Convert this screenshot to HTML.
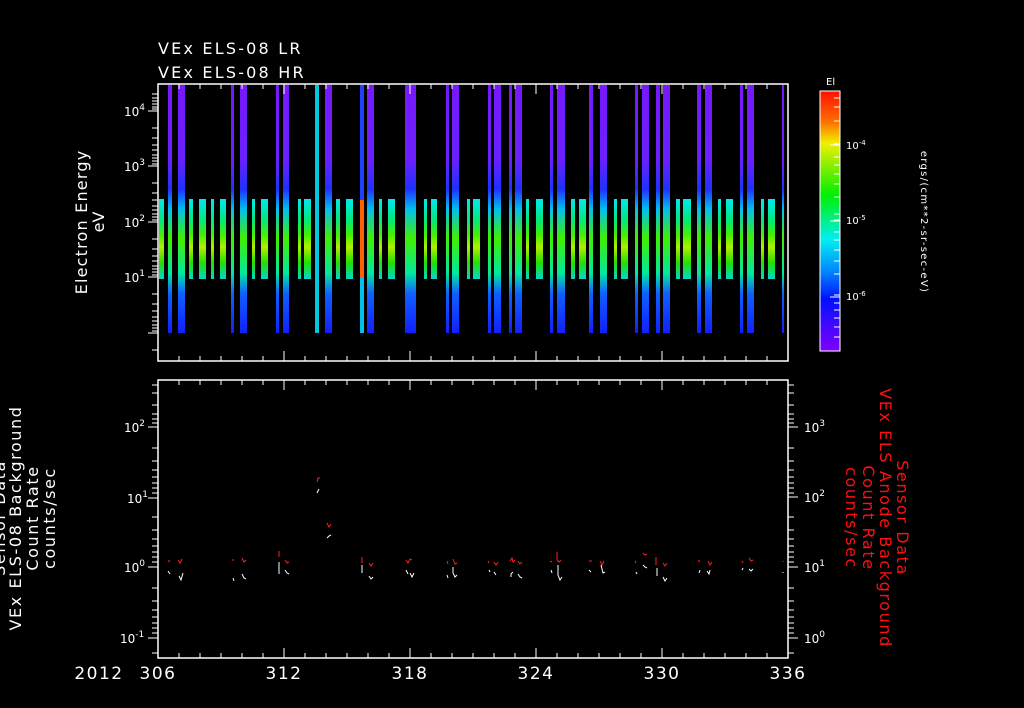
<!DOCTYPE html>
<html><head><meta charset="utf-8"><style>
html,body{margin:0;padding:0;background:#000;}
svg{display:block;}
text{font-family:"DejaVu Sans","Liberation Sans",sans-serif;fill:#fff;}
</style></head><body>
<svg width="1024" height="708" viewBox="0 0 1024 708" xmlns="http://www.w3.org/2000/svg">
<defs>
<linearGradient id="band" x1="0" y1="0" x2="0" y2="1">
<stop offset="0" stop-color="#00e8f0"/><stop offset="0.25" stop-color="#00e880"/><stop offset="0.45" stop-color="#40f000"/><stop offset="0.6" stop-color="#b0f000"/><stop offset="0.8" stop-color="#20e000"/><stop offset="1" stop-color="#00d8d0"/>
</linearGradient>
<linearGradient id="tall" x1="0" y1="0" x2="0" y2="1">
<stop offset="0" stop-color="#7818ff"/><stop offset="0.3" stop-color="#6a20ff"/><stop offset="0.42" stop-color="#2030ff"/><stop offset="0.5" stop-color="#00c0f0"/><stop offset="0.62" stop-color="#40f000"/><stop offset="0.76" stop-color="#00e8a0"/><stop offset="0.84" stop-color="#1060ff"/><stop offset="1" stop-color="#1020ff"/>
</linearGradient>
<linearGradient id="cbar" x1="0" y1="0" x2="0" y2="1">
<stop offset="0" stop-color="#ff1000"/><stop offset="0.12" stop-color="#ff7000"/><stop offset="0.2" stop-color="#f0f000"/><stop offset="0.4" stop-color="#00f000"/><stop offset="0.57" stop-color="#00f0f0"/><stop offset="0.7" stop-color="#0080ff"/><stop offset="0.8" stop-color="#0010ff"/><stop offset="1" stop-color="#8000ff"/>
</linearGradient>
</defs>

<text x="158" y="54" font-size="16" letter-spacing="2.2">VEx ELS-08 LR</text>
<text x="158" y="78" font-size="16" letter-spacing="2.2">VEx ELS-08 HR</text>

<g fill="url(#band)">
<rect x="159" y="199" width="5" height="80"/><rect x="189" y="199" width="4" height="80"/><rect x="199" y="199" width="7" height="80"/><rect x="211" y="199" width="3" height="80"/><rect x="220" y="199" width="6" height="80"/><rect x="252" y="199" width="3" height="80"/><rect x="261" y="199" width="7" height="80"/><rect x="298" y="199" width="3" height="80"/><rect x="304" y="199" width="7" height="80"/><rect x="336" y="199" width="4" height="80"/><rect x="346" y="199" width="7" height="80"/><rect x="379" y="199" width="3" height="80"/><rect x="388" y="199" width="7" height="80"/><rect x="424" y="199" width="3" height="80"/><rect x="431" y="199" width="6" height="80"/><rect x="467" y="199" width="3" height="80"/><rect x="473" y="199" width="7" height="80"/><rect x="526" y="199" width="3" height="80"/><rect x="536" y="199" width="7" height="80"/><rect x="571" y="199" width="4" height="80"/><rect x="579" y="199" width="7" height="80"/><rect x="614" y="199" width="3" height="80"/><rect x="621" y="199" width="7" height="80"/><rect x="676" y="199" width="4" height="80"/><rect x="683" y="199" width="8" height="80"/><rect x="718" y="199" width="3" height="80"/><rect x="726" y="199" width="7" height="80"/><rect x="761" y="199" width="3" height="80"/><rect x="768" y="199" width="7" height="80"/>
</g>
<g fill="url(#tall)">
<rect x="168" y="85" width="4" height="248"/><rect x="178" y="85" width="7" height="248"/><rect x="231" y="85" width="3" height="248"/><rect x="240" y="85" width="7" height="248"/><rect x="276" y="85" width="3" height="248"/><rect x="283" y="85" width="6" height="248"/><rect x="325" y="85" width="7" height="248"/><rect x="367" y="85" width="7" height="248"/><rect x="405" y="85" width="11" height="248"/><rect x="446" y="85" width="3" height="248"/><rect x="452" y="85" width="7" height="248"/><rect x="488" y="85" width="3" height="248"/><rect x="494" y="85" width="7" height="248"/><rect x="509" y="85" width="3" height="248"/><rect x="515" y="85" width="7" height="248"/><rect x="550" y="85" width="3" height="248"/><rect x="557" y="85" width="8" height="248"/><rect x="589" y="85" width="4" height="248"/><rect x="600" y="85" width="7" height="248"/><rect x="635" y="85" width="3" height="248"/><rect x="642" y="85" width="7" height="248"/><rect x="656" y="85" width="4" height="248"/><rect x="663" y="85" width="7" height="248"/><rect x="697" y="85" width="4" height="248"/><rect x="705" y="85" width="7" height="248"/><rect x="740" y="85" width="3" height="248"/><rect x="747" y="85" width="7" height="248"/><rect x="782" y="85" width="2" height="248"/>
</g>
<rect x="315" y="85" width="4" height="248" fill="#00c8e0"/>
<rect x="360" y="200" width="4" height="78" fill="#ff6000"/>
<rect x="360" y="85" width="4" height="115" fill="#2040ff"/>
<rect x="360" y="278" width="4" height="55" fill="#00c0f0"/>

<g stroke="#fff" stroke-width="1.5" fill="none">
<rect x="158" y="84" width="630" height="277"/>
</g>
<g stroke="#fff" stroke-width="1">
<path d="M179 84v5M200 84v5M221 84v5M242 84v5M263 84v5M284 84v10M305 84v5M326 84v5M347 84v5M368 84v5M389 84v5M410 84v10M431 84v5M452 84v5M473 84v5M494 84v5M515 84v5M536 84v10M557 84v5M578 84v5M599 84v5M620 84v5M641 84v5M662 84v10M683 84v5M704 84v5M725 84v5M746 84v5M767 84v5"/>
<path d="M179 361v-5M200 361v-5M221 361v-5M242 361v-5M263 361v-5M284 361v-10M305 361v-5M326 361v-5M347 361v-5M368 361v-5M389 361v-5M410 361v-10M431 361v-5M452 361v-5M473 361v-5M494 361v-5M515 361v-5M536 361v-10M557 361v-5M578 361v-5M599 361v-5M620 361v-5M641 361v-5M662 361v-10M683 361v-5M704 361v-5M725 361v-5M746 361v-5M767 361v-5"/>
<path d="M148 111h10M148 166h10M148 222h10M148 277h10M148 333h10"/>
<path d="M152 94h6M152 98h6M152 101h6M152 104h6M152 107h6M152 109h6M152 128h6M152 138h6M152 145h6M152 150h6M152 155h6M152 158h6M152 161h6M152 164h6M152 183h6M152 193h6M152 200h6M152 206h6M152 210h6M152 214h6M152 217h6M152 220h6M152 239h6M152 249h6M152 256h6M152 261h6M152 266h6M152 269h6M152 272h6M152 275h6M152 294h6M152 304h6M152 311h6M152 317h6M152 321h6M152 325h6M152 328h6M152 331h6M152 350h6"/>
</g>
<g font-size="12">
<text x="124" y="116">10<tspan font-size="9" dy="-6">4</tspan></text>
<text x="124" y="171">10<tspan font-size="9" dy="-6">3</tspan></text>
<text x="124" y="227">10<tspan font-size="9" dy="-6">2</tspan></text>
<text x="124" y="282">10<tspan font-size="9" dy="-6">1</tspan></text>
</g>
<text transform="translate(87,222) rotate(-90)" text-anchor="middle" font-size="16" letter-spacing="1.2">Electron Energy</text>
<text transform="translate(104,222) rotate(-90)" text-anchor="middle" font-size="16">eV</text>

<rect x="820" y="91" width="20" height="260" fill="url(#cbar)" stroke="#fff" stroke-width="1"/>
<g stroke="#fff" stroke-width="1">
<path d="M834 98h6M834 107h6M834 121h6M834 144h6M830 145h10M834 157h6M834 165h6M834 174h6M834 184h6M834 197h6M834 214h6M834 220h6M830 221h10M834 232h6M834 240h6M834 250h6M834 261h6M834 274h6M834 295h6M830 297h10M834 303h6M834 310h6M834 318h6M834 327h6M834 337h6"/>
</g>
<text x="826" y="85" font-size="10">El</text>
<g font-size="10">
<text x="846" y="149">10<tspan font-size="7" dy="-4">-4</tspan></text>
<text x="846" y="224">10<tspan font-size="7" dy="-4">-5</tspan></text>
<text x="846" y="300">10<tspan font-size="7" dy="-4">-6</tspan></text>
</g>
<text transform="translate(921,222) rotate(90)" text-anchor="middle" font-size="10" letter-spacing="1.3">ergs/(cm**2-sr-sec-eV)</text>

<g stroke="#fff" stroke-width="1.5" fill="none">
<rect x="158" y="380" width="630" height="278"/>
</g>
<g stroke="#fff" stroke-width="1">
<path d="M179 380v5M200 380v5M221 380v5M242 380v5M263 380v5M284 380v10M305 380v5M326 380v5M347 380v5M368 380v5M389 380v5M410 380v10M431 380v5M452 380v5M473 380v5M494 380v5M515 380v5M536 380v10M557 380v5M578 380v5M599 380v5M620 380v5M641 380v5M662 380v10M683 380v5M704 380v5M725 380v5M746 380v5M767 380v5"/>
<path d="M179 658v-5M200 658v-5M221 658v-5M242 658v-5M263 658v-5M284 658v-10M305 658v-5M326 658v-5M347 658v-5M368 658v-5M389 658v-5M410 658v-10M431 658v-5M452 658v-5M473 658v-5M494 658v-5M515 658v-5M536 658v-10M557 658v-5M578 658v-5M599 658v-5M620 658v-5M641 658v-5M662 658v-10M683 658v-5M704 658v-5M725 658v-5M746 658v-5M767 658v-5"/>
<path d="M148 427h10M148 498h10M148 567h10M148 638h10"/>
<path d="M152 385h6M152 393h6M152 405h6M152 414h6M152 419h6M152 423h6M152 448h6M152 461h6M152 470h6M152 477h6M152 483h6M152 488h6M152 493h6M152 517h6M152 530h6M152 539h6M152 546h6M152 552h6M152 557h6M152 562h6M152 588h6M152 601h6M152 610h6M152 617h6M152 623h6M152 628h6M152 633h6M152 653h6"/>
<path d="M788 427h10M788 497h10M788 567h10M788 638h10"/>
<path d="M788 385h6M788 393h6M788 405h6M788 414h6M788 419h6M788 423h6M788 448h6M788 461h6M788 470h6M788 477h6M788 483h6M788 488h6M788 493h6M788 517h6M788 530h6M788 539h6M788 546h6M788 552h6M788 557h6M788 562h6M788 588h6M788 601h6M788 610h6M788 617h6M788 623h6M788 628h6M788 633h6M788 653h6"/>
</g>
<g font-size="12">
<text x="124" y="432">10<tspan font-size="9" dy="-6">2</tspan></text>
<text x="127" y="503">10<tspan font-size="9" dy="-6">1</tspan></text>
<text x="124" y="572">10<tspan font-size="9" dy="-6">0</tspan></text>
<text x="120" y="643">10<tspan font-size="9" dy="-6">-1</tspan></text>
<text x="804" y="432">10<tspan font-size="9" dy="-6">3</tspan></text>
<text x="804" y="502">10<tspan font-size="9" dy="-6">2</tspan></text>
<text x="804" y="572">10<tspan font-size="9" dy="-6">1</tspan></text>
<text x="804" y="643">10<tspan font-size="9" dy="-6">0</tspan></text>
</g>

<g fill="none" stroke="#ff2020" stroke-width="1">
<path d="M168 562l2 -2M178 560l2 3 2-4M232 560h2M242 558l2 4 2-2M279 551v6M285 560l2 3 2-1M317 482l1 -4 2 0M327 523l2 4 2 -3M362 557v6M369 563l2 3 2-3M406 560l2 3 2-4 2 1M447 561l1 3M453 559l2 5 2-1M488 561l1 2M494 562l2 3 2-3M510 561l2-3 1 4 2 -2M518 561l2 3 2-2M550 561l2 1M557 552v8l2 2 2 -2M589 561h3M600 561l2 4 2-4M635 561l1 2M643 553l2 2 2-1M656 557v8M663 563l2 3 2-3M698 560l2 2M708 561l2 4 2-3M742 561l1 2M749 558l2 3 2-1M783 561v1"/>
</g>
<g fill="none" stroke="#ffffff" stroke-width="1">
<path d="M168 571l2 3M179 576l2 4 2-7M233 578l1 3M242 574l2 4 2 1M279 562v12M285 570l2 3 2 1M317 493l2-4M327 538l2-2 2-1M362 565v8M369 576l2 3 2-2M406 570l2 4M410 573l2 4 2-4M447 575l1 3M453 567v6l2 4 2-2M489 570l1 2M494 572l2 3M511 577v-3l2-2M518 574l2 3 2 1M551 570l1 3M558 565v10l2 5 2-3M589 570l2 2M601 565l2 8 2-1M636 572l1 2M643 565l2 2 2 1M657 568v8M663 577l2 4 2-3M699 573l1-3M707 571l2 3 1-4M742 570l1-2M749 569l2 2 2-2M783 572v1"/>
</g>

<g font-size="16" text-anchor="middle" letter-spacing="1.6">
<text transform="translate(5,518) rotate(-90)">Sensor Data</text>
<text transform="translate(21,518) rotate(-90)">VEx ELS-08 Background</text>
<text transform="translate(38,518) rotate(-90)">Count Rate</text>
<text transform="translate(55,518) rotate(-90)">counts/sec</text>
</g>
<g font-size="16" text-anchor="middle" letter-spacing="1.6">
<text transform="translate(897,518) rotate(90)" style="fill:#ff1010">Sensor Data</text>
<text transform="translate(880,518) rotate(90)" style="fill:#ff1010">VEx ELS Anode Background</text>
<text transform="translate(863,518) rotate(90)" style="fill:#ff1010">Count Rate</text>
<text transform="translate(846,518) rotate(90)" style="fill:#ff1010">counts/sec</text>
</g>

<g font-size="17" text-anchor="middle" letter-spacing="1.5">
<text x="99" y="679">2012</text>
<text x="158" y="679">306</text>
<text x="284" y="679">312</text>
<text x="410" y="679">318</text>
<text x="536" y="679">324</text>
<text x="662" y="679">330</text>
<text x="788" y="679">336</text>
</g>
</svg>
</body></html>
